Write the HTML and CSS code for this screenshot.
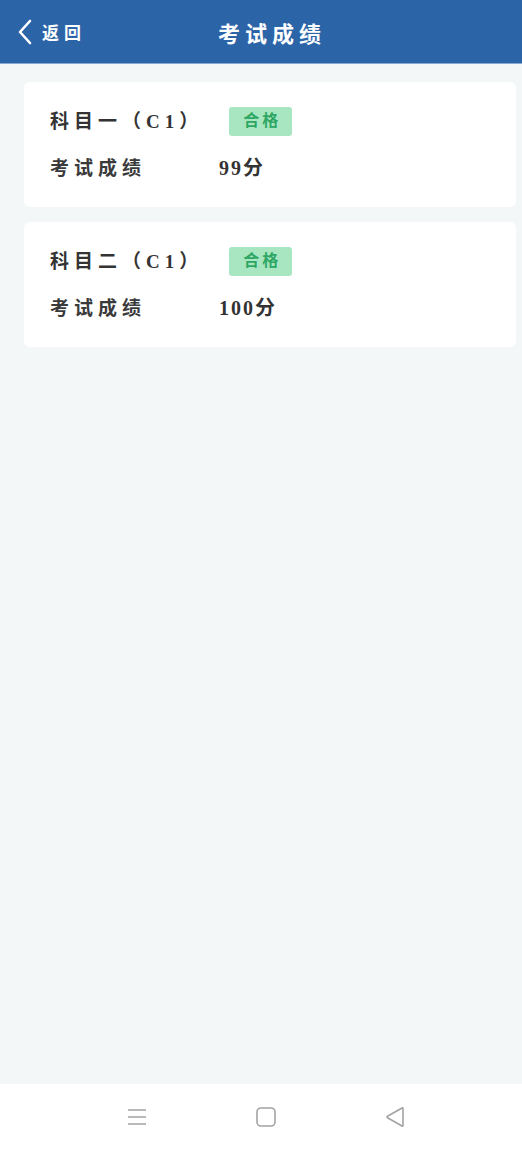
FILE: index.html
```html
<!DOCTYPE html>
<html lang="zh-CN">
<head>
    <meta charset="UTF-8">
    <meta name="viewport" content="width=device-width, initial-scale=1.0">
    <title>考试成绩</title>
    <link rel="stylesheet" href="styles.css">
</head>
<body>
    <div class="page">
        <header class="topbar">
            <a class="back" href="#">
                <svg class="back-icon" width="16" height="26" viewBox="0 0 16 26">
                    <path d="M13 2 L3 13 L13 24" fill="none" stroke="#fff" stroke-width="2.6" stroke-linecap="round" stroke-linejoin="round"/>
                </svg>
                <span>返回</span>
            </a>
            <h1 class="title">考试成绩</h1>
        </header>

        <main class="content">
            <div class="card">
                <div class="card-head">
                    <span class="subject">科目一（C1）</span>
                    <span class="badge">合格</span>
                </div>
                <div class="row">
                    <span class="label">考试成绩</span>
                    <span class="value">99分</span>
                </div>
            </div>

            <div class="card">
                <div class="card-head">
                    <span class="subject">科目二（C1）</span>
                    <span class="badge">合格</span>
                </div>
                <div class="row">
                    <span class="label">考试成绩</span>
                    <span class="value">100分</span>
                </div>
            </div>
        </main>

        <nav class="sysbar">
            <svg width="22" height="22" viewBox="0 0 22 22">
                <path d="M2 4 H20 M2 11 H20 M2 18 H20" stroke="#a3a3a3" stroke-width="1.6"/>
            </svg>
            <svg width="22" height="22" viewBox="0 0 22 22">
                <rect x="2" y="2" width="18" height="18" rx="4" fill="none" stroke="#a3a3a3" stroke-width="1.6"/>
            </svg>
            <svg width="22" height="22" viewBox="0 0 22 22">
                <path d="M19 2.5 L19 19.5 Q19 20.5 18 20 L3.5 11.8 Q2.6 11 3.5 10.2 L18 2 Q19 1.5 19 2.5 Z" fill="none" stroke="#a3a3a3" stroke-width="1.6" stroke-linejoin="round"/>
            </svg>
        </nav>
    </div>
</body>
</html>
```

FILE: styles.css
```css
html, body {
    margin: 0;
    padding: 0;
    height: 100%;
}
body {
    font-family: "Liberation Serif", "Noto Sans CJK SC", serif;
    color: #333;
    background-color: #f3f7f8;
}
.page {
    display: flex;
    flex-direction: column;
    height: 100vh;
}
.topbar {
    height: 63px;
    background-color: #2c64a8;
    border-bottom: 1px solid #86a9d4;
    display: flex;
    align-items: center;
    position: relative;
    flex-shrink: 0;
}
.back {
    display: flex;
    align-items: center;
    padding-left: 17px;
    color: #fff;
    text-decoration: none;
    font-size: 17px;
    font-weight: bold;
    letter-spacing: 5px;
}
.back-icon {
    margin-right: 9px;
}
.title {
    position: absolute;
    left: 0;
    right: 0;
    margin: 0;
    text-align: center;
    padding-left: 22px;
    color: #fff;
    font-size: 22px;
    font-weight: bold;
    letter-spacing: 5px;
    pointer-events: none;
}
.content {
    flex: 1;
    padding: 18px 6px 0 24px;
    display: flex;
    flex-direction: column;
    gap: 15px;
}
.card {
    background-color: #fff;
    border-radius: 6px;
    padding: 25px 26px;
    display: flex;
    flex-direction: column;
    gap: 18px;
}
.card-head {
    display: flex;
    align-items: center;
    height: 29px;
}
.subject {
    font-size: 19px;
    font-weight: bold;
    letter-spacing: 5px;
    margin-right: 26px;
    padding-bottom: 5px;
}
.badge {
    width: 63px;
    height: 29px;
    line-height: 27px;
    text-align: center;
    background-color: #a8e6c1;
    color: #2ea764;
    font-size: 16px;
    font-weight: bold;
    letter-spacing: 3px;
    text-indent: 3px;
    border-radius: 3px;
}
.row {
    display: flex;
    align-items: center;
    height: 28px;
    font-size: 19px;
    font-weight: bold;
}
.label {
    width: 169px;
    letter-spacing: 5px;
    color: #3a3a3a;
    padding-bottom: 4px;
}
.value {
    font-size: 20px;
    letter-spacing: 2px;
    padding-bottom: 4px;
}
.sysbar {
    height: 66px;
    background-color: #fff;
    display: flex;
    align-items: center;
    justify-content: center;
    gap: 107px;
    padding-left: 10px;
    flex-shrink: 0;
}
```
